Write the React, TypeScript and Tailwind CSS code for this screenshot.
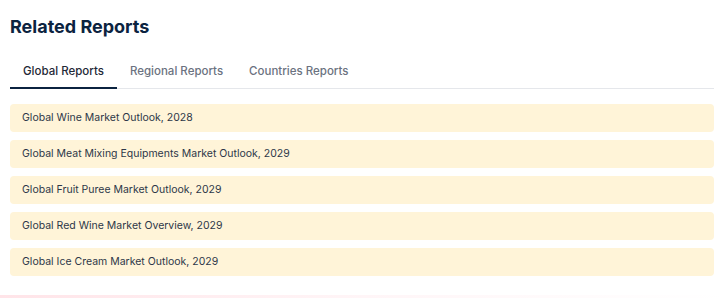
import React, { useState } from 'react';

const tabs = ['Global Reports', 'Regional Reports', 'Countries Reports'];

const reports = [
  'Global Wine Market Outlook, 2028',
  'Global Meat Mixing Equipments Market Outlook, 2029',
  'Global Fruit Puree Market Outlook, 2029',
  'Global Red Wine Market Overview, 2029',
  'Global Ice Cream Market Outlook, 2029',
];

export default function App() {
  const [active, setActive] = useState(0);

  return (
    <div className="min-h-[298px] bg-white font-['Inter',sans-serif]">
      <div className="pl-[10px] pr-[12px] pt-[15px]">
        <h2 className="text-[18px] font-bold leading-[24px] text-[#0b2340]">Related Reports</h2>

        <div className="mt-[19px] flex border-b border-[#e5e7eb]">
          {tabs.map((tab, i) => (
            <button
              key={tab}
              onClick={() => setActive(i)}
              className={`-mb-px px-[13px] pb-[7px] pt-[4px] text-[11.5px] font-medium leading-[18px] ${
                i === active
                  ? 'border-b-2 border-[#0b2340] text-[#1f2937]'
                  : 'border-b-2 border-transparent text-[#6b7280]'
              }`}
            >
              {tab}
            </button>
          ))}
        </div>

        <div className="mt-[15px] flex flex-col gap-[8px]">
          {reports.map((title) => (
            <a
              key={title}
              href="#"
              className="flex h-[28px] items-center rounded-[4px] bg-[#fff4d8] px-[12px] text-[10.5px] text-[#2d3748]"
            >
              {title}
            </a>
          ))}
        </div>
      </div>
      <div className="mt-[19px] h-[4px] bg-gradient-to-r from-[#ffe4e8] via-[#fff5f7] to-white" />
    </div>
  );
}
